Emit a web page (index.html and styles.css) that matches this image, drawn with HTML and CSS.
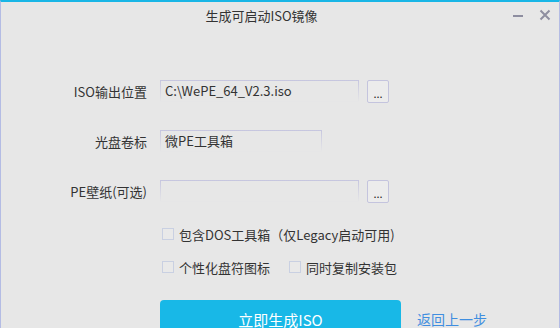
FILE: index.html
```html
<!DOCTYPE html>
<html lang="zh-CN">

<head>
  <meta charset="UTF-8">
  <title>生成可启动ISO镜像</title>
  <link rel="stylesheet" href="styles.css">
</head>

<body>
  <div class="window">
    <!-- 标题栏 -->
    <div class="titlebar">
      <div class="title">生成可启动ISO镜像</div>
      <div class="win-controls">
        <svg class="win-btn" width="12" height="12" viewBox="0 0 12 12">
          <path d="M1 7h10" stroke="#8e8ea0" stroke-width="2" />
        </svg>
        <svg class="win-btn" width="12" height="12" viewBox="0 0 12 12">
          <path d="M1.5 1.5l9 9M10.5 1.5l-9 9" stroke="#8e8ea0" stroke-width="2" />
        </svg>
      </div>
    </div>

    <!-- 表单 -->
    <div class="form">
      <div class="form-row">
        <label class="form-label">ISO输出位置</label>
        <div class="text-field wide">C:\WePE_64_V2.3.iso</div>
        <button class="browse-btn">...</button>
      </div>
      <div class="form-row">
        <label class="form-label">光盘卷标</label>
        <div class="text-field short">微PE工具箱</div>
      </div>
      <div class="form-row">
        <label class="form-label">PE壁纸(可选)</label>
        <div class="text-field wide"></div>
        <button class="browse-btn">...</button>
      </div>

      <div class="options">
        <div class="option-row">
          <span class="check"><i class="check-box"></i>包含DOS工具箱（仅Legacy启动可用)</span>
        </div>
        <div class="option-row">
          <span class="check"><i class="check-box"></i>个性化盘符图标</span>
          <span class="check"><i class="check-box"></i>同时复制安装包</span>
        </div>
      </div>

      <div class="actions">
        <button class="primary-btn">立即生成ISO</button>
        <a href="#" class="back-link">返回上一步</a>
      </div>
    </div>
  </div>
</body>

</html>
```

FILE: styles.css
```css
/* 全局样式 */
body {
  margin: 0;
  padding: 0;
  font-family: "Noto Sans CJK SC", sans-serif;
  font-size: 13px;
  color: #333;
  background-color: #e7e7e7;
  overflow: hidden;
}

.window {
  width: 560px;
  height: 328px;
  box-sizing: border-box;
  border-top: 2px solid #19b6e6;
  border-left: 1px solid #b4bce4;
  border-right: 1px solid #b4bce4;
  background-color: #e7e7e7;
  overflow: hidden;
}

/* 标题栏 */
.titlebar {
  height: 28px;
  display: flex;
  align-items: center;
}

.title {
  flex: 1;
  text-align: center;
  padding-right: 37px;
  margin-top: -2px;
}

.win-controls {
  position: absolute;
  top: 9px;
  right: 9px;
  display: flex;
  gap: 15px;
}

/* 表单 */
.form {
  padding-top: 50px;
  display: flex;
  flex-direction: column;
  gap: 27px;
}

.form-row {
  display: flex;
  align-items: center;
  height: 23px;
}

.form-label {
  width: 146px;
  padding-right: 13px;
  text-align: right;
}

.text-field {
  height: 22px;
  box-sizing: border-box;
  border: 1px solid;
  border-image: linear-gradient(#c6c6df, rgba(198, 198, 223, 0)) 1;
  padding: 0 4px;
  line-height: 20px;
  align-self: flex-start;
}

.text-field.wide {
  width: 199px;
}

.text-field.short {
  width: 162px;
}

.browse-btn {
  width: 22px;
  height: 23px;
  margin-left: 8px;
  padding: 0 0 3px 0;
  border: 1px solid #c4c4de;
  border-radius: 2px;
  background-color: #ececec;
  font-family: inherit;
  font-size: 11px;
  line-height: 1;
  color: #222;
  display: flex;
  align-items: flex-end;
  justify-content: center;
}

/* 复选项 */
.options {
  margin-top: -5px;
  padding-left: 161px;
  display: flex;
  flex-direction: column;
  gap: 15px;
}

.option-row {
  display: flex;
  gap: 19px;
  height: 18px;
  align-items: center;
}

.check {
  display: flex;
  align-items: center;
  gap: 5px;
}

.check-box {
  width: 12px;
  height: 12px;
  box-sizing: border-box;
  border: 1px solid #c9d0e2;
  background-color: #e9e9e9;
}

/* 底部按钮 */
.actions {
  margin-top: -3px;
  padding-left: 159px;
  display: flex;
  align-items: center;
  gap: 16px;
}

.primary-btn {
  width: 241px;
  height: 38px;
  border: none;
  border-radius: 4px;
  background-color: #18b8e7;
  color: #fff;
  font-family: inherit;
  font-size: 15px;
  padding: 0;
}

.back-link {
  color: #3f8ee0;
  font-size: 14px;
  text-decoration: none;
}
```
